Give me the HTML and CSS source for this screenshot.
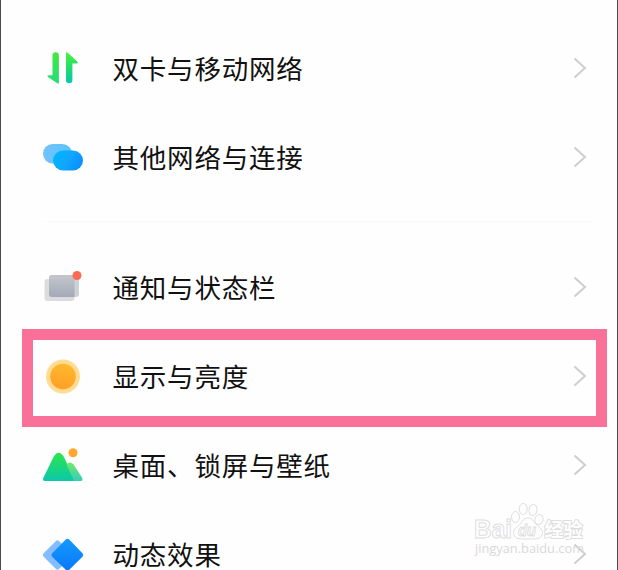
FILE: index.html
```
<!DOCTYPE html>
<html lang="zh-CN">
<head>
<meta charset="utf-8">
<title>设置</title>
<link rel="stylesheet" href="styles.css">
</head>
<body>
<main class="screen">
  <section class="group network">
    <div class="row">
      <svg class="icon" viewBox="0 0 50 50">
        <defs><linearGradient id="data" x1="0" y1="0" x2="0" y2="1"><stop offset="0" stop-color="#49f43f"/><stop offset=".5" stop-color="#22dc68"/><stop offset="1" stop-color="#05c5b5"/></linearGradient>
        <linearGradient id="down" x1="0" y1="0" x2="0" y2="1"><stop offset="0" stop-color="#43e83f"/><stop offset="1" stop-color="#24dc7b"/></linearGradient></defs>
        <path fill="url(#down)" d="M17.500 11.500a3.200 3.200 0 0 1 6.400 0v27q0 2-2 .5L13 33q-1.500-1.800 1-1.800h3.500z"/>
        <path fill="url(#data)" d="M31 9.500q0-2 2-.5l9.200 8.500q1.400 2-1 2H37.400V36a3.200 3.200 0 0 1-6.400 0z"/>
      </svg>
      <span class="label">双卡与移动网络</span>
      <svg class="chevron" viewBox="0 0 14 22"><path d="M1.500 1.500 12 11 1.500 20.500"/></svg>
    </div>
    <div class="row">
      <svg class="icon" viewBox="0 0 50 50">
        <defs><linearGradient id="cloud" x1="0" y1=".3" x2="1" y2=".7"><stop offset="0" stop-color="#00b5ff"/><stop offset=".5" stop-color="#12a5ff"/><stop offset="1" stop-color="#068fff"/></linearGradient>
        <linearGradient id="back"><stop offset="0" stop-color="#75c1fb"/><stop offset="1" stop-color="#58c6fa"/></linearGradient></defs>
        <rect x="8" y="11" width="29" height="19.500" rx="9.700" fill="url(#back)"/>
        <rect x="18" y="17.500" width="30" height="20" rx="10" fill="url(#cloud)"/>
      </svg>
      <span class="label">其他网络与连接</span>
      <svg class="chevron" viewBox="0 0 14 22"><path d="M1.500 1.500 12 11 1.500 20.500"/></svg>
    </div>
  </section>
  <div class="divider"></div>
  <section class="group device">
    <div class="row">
      <svg class="icon" viewBox="0 0 50 50">
        <defs><linearGradient id="panel" x1="0" y1="0" x2="0" y2="1"><stop offset="0" stop-color="#bec1c9"/><stop offset="1" stop-color="#a3a9b7"/></linearGradient></defs>
        <rect x="9.500" y="17" width="30" height="22" rx="3" fill="#dcdcdf"/>
        <rect x="14" y="13" width="30" height="22" rx="3" fill="#cfd0d5"/>
        <path d="M14 17h25.500v18H17q-3 0-3-3z" fill="url(#panel)"/>
        <path d="M14 17v-1q0-3 3-3h22.500v4z" fill="#c2c4ca"/>
        <circle cx="42" cy="13.500" r="4.500" fill="#fb6b54"/>
      </svg>
      <span class="label">通知与状态栏</span>
      <svg class="chevron" viewBox="0 0 14 22"><path d="M1.500 1.500 12 11 1.500 20.500"/></svg>
    </div>
    <div class="row selected">
      <svg class="icon" viewBox="0 0 50 50">
        <defs><linearGradient id="sun" x1=".6" y1="0" x2=".4" y2="1"><stop offset="0" stop-color="#ffb82d"/><stop offset="1" stop-color="#ff9f28"/></linearGradient></defs>
        <circle cx="28" cy="25.500" r="17" fill="#ffdc91"/>
        <circle cx="28" cy="25.500" r="12.800" fill="url(#sun)"/>
      </svg>
      <span class="label">显示与亮度</span>
      <svg class="chevron" viewBox="0 0 14 22"><path d="M1.500 1.500 12 11 1.500 20.500"/></svg>
    </div>
    <div class="row">
      <svg class="icon" viewBox="0 0 50 50">
        <defs><linearGradient id="hill" x1="0" y1="0" x2="0" y2="1"><stop offset="0" stop-color="#2ce64b"/><stop offset="1" stop-color="#0bc7ac"/></linearGradient>
        <linearGradient id="slope" x1="0" y1="0" x2="0" y2="1"><stop offset="0" stop-color="#71e969"/><stop offset="1" stop-color="#35cdb9"/></linearGradient></defs>
        <path fill="url(#hill)" d="M8.500 37.500 18.500 17q5-8.500 10.500 0L40 41H10q-3 0-1.500-3.500z"/>
        <path fill="url(#slope)" d="m31.500 24.500 1-1q3-2.500 6 1L47 37.500q1.500 3.500-1.500 3.500H39z"/>
        <circle cx="38" cy="12.800" r="4.500" fill="#ffa72e"/>
      </svg>
      <span class="label">桌面、锁屏与壁纸</span>
      <svg class="chevron" viewBox="0 0 14 22"><path d="M1.500 1.500 12 11 1.500 20.500"/></svg>
    </div>
    <div class="row">
      <svg class="icon" viewBox="0 0 50 50">
        <defs><linearGradient id="motion" x1="0" y1="0" x2="0" y2="1"><stop offset="0" stop-color="#1599ff"/><stop offset="1" stop-color="#0879f8"/></linearGradient></defs>
        <rect x="11.500" y="15" width="22" height="22" rx="2.500" transform="rotate(45 22.500 26)" fill="#83bdff"/>
        <path d="M30.500 10.700q2-2 4 0L47.200 24q2 2 0 4L34.500 40.500q-2 2-4 0L17.500 28q-2-2 0-4z" fill="url(#motion)"/>
      </svg>
      <span class="label">动态效果</span>
      <svg class="chevron" viewBox="0 0 14 22"><path d="M1.500 1.500 12 11 1.500 20.500"/></svg>
    </div>
  </section>
  <svg class="watermark" viewBox="0 0 124 60">
    <g class="mark">
      <text class="brand" x="4" y="37.500" textLength="38" lengthAdjust="spacingAndGlyphs">Bai</text>
      <path d="M58 18c-5 0-5 4-9.500 7.500-4 3-6 6-4.500 9.500 1.500 4 5 4 14 4s12.500 0 14-4c1.500-3.500-.5-6.500-4.500-9.500C63 22 63 18 58 18z"/>
      <ellipse cx="45.500" cy="17" rx="4" ry="5.500"/>
      <ellipse cx="53.200" cy="9" rx="4" ry="5.500"/>
      <ellipse cx="63" cy="10" rx="4" ry="5.500" transform="rotate(8 63 10)"/>
      <ellipse cx="69" cy="19.500" rx="4" ry="5" transform="rotate(18 69 19.500)"/>
      <text class="du" x="48" y="36" textLength="18" lengthAdjust="spacingAndGlyphs">du</text>
      <text class="cn" x="74.500" y="36.500">经验</text>
    </g>
    <text class="url" x="5" y="52.500" textLength="109" lengthAdjust="spacingAndGlyphs">jingyan.baidu.com</text>
  </svg>
</main>
</body>
</html>
```
FILE: styles.css
```
* { box-sizing: border-box; }
body {
  margin: 0;
  background: #fefefe;
  color: #111;
  font-family: "Noto Sans CJK SC", sans-serif;
}
.screen {
  position: relative;
  height: 570px;
  padding-top: 23px;
  overflow: hidden;
  border-left: 1px solid #4a4a4a;
  border-right: 1px solid #4a4a4a;
}
.row {
  position: relative;
  display: flex;
  align-items: center;
  height: 89px;
  padding: 0 30px 0 34px;
}
.icon {
  flex: none;
  width: 50px;
  height: 50px;
}
.network .icon { margin-top: 2px; }
.label {
  flex: 1;
  margin-left: 27.500px;
  font-size: 26.500px;
  line-height: 38px;
  letter-spacing: 0.800px;
  white-space: nowrap;
}
.device .label { padding-top: 1px; }
.chevron {
  flex: none;
  width: 14px;
  height: 22px;
  fill: none;
  stroke: #cecece;
  stroke-width: 2;
}
.divider {
  height: 1px;
  margin: 20px 25px 20px 43px;
  background: #fafafa;
}
.selected::after {
  content: "";
  position: absolute;
  top: -2px;
  right: 10px;
  bottom: -7px;
  left: 21px;
  border: 11px solid #f97099;
}
.watermark {
  position: absolute;
  left: 469px;
  top: 500px;
  width: 124px;
  height: 60px;
}
.mark {
  fill: #fefefe;
  stroke: #dedede;
  stroke-width: 1;
}
.brand { font: bold 25px "Liberation Sans", sans-serif; }
.du { font: italic bold 16px "Liberation Sans", sans-serif; }
.cn {
  font: bold 19px "Noto Sans CJK SC", sans-serif;
  stroke-width: 2;
  paint-order: stroke;
}
.url {
  font: 13px "Open Sans", sans-serif;
  fill: #d9d9d9;
}
```
